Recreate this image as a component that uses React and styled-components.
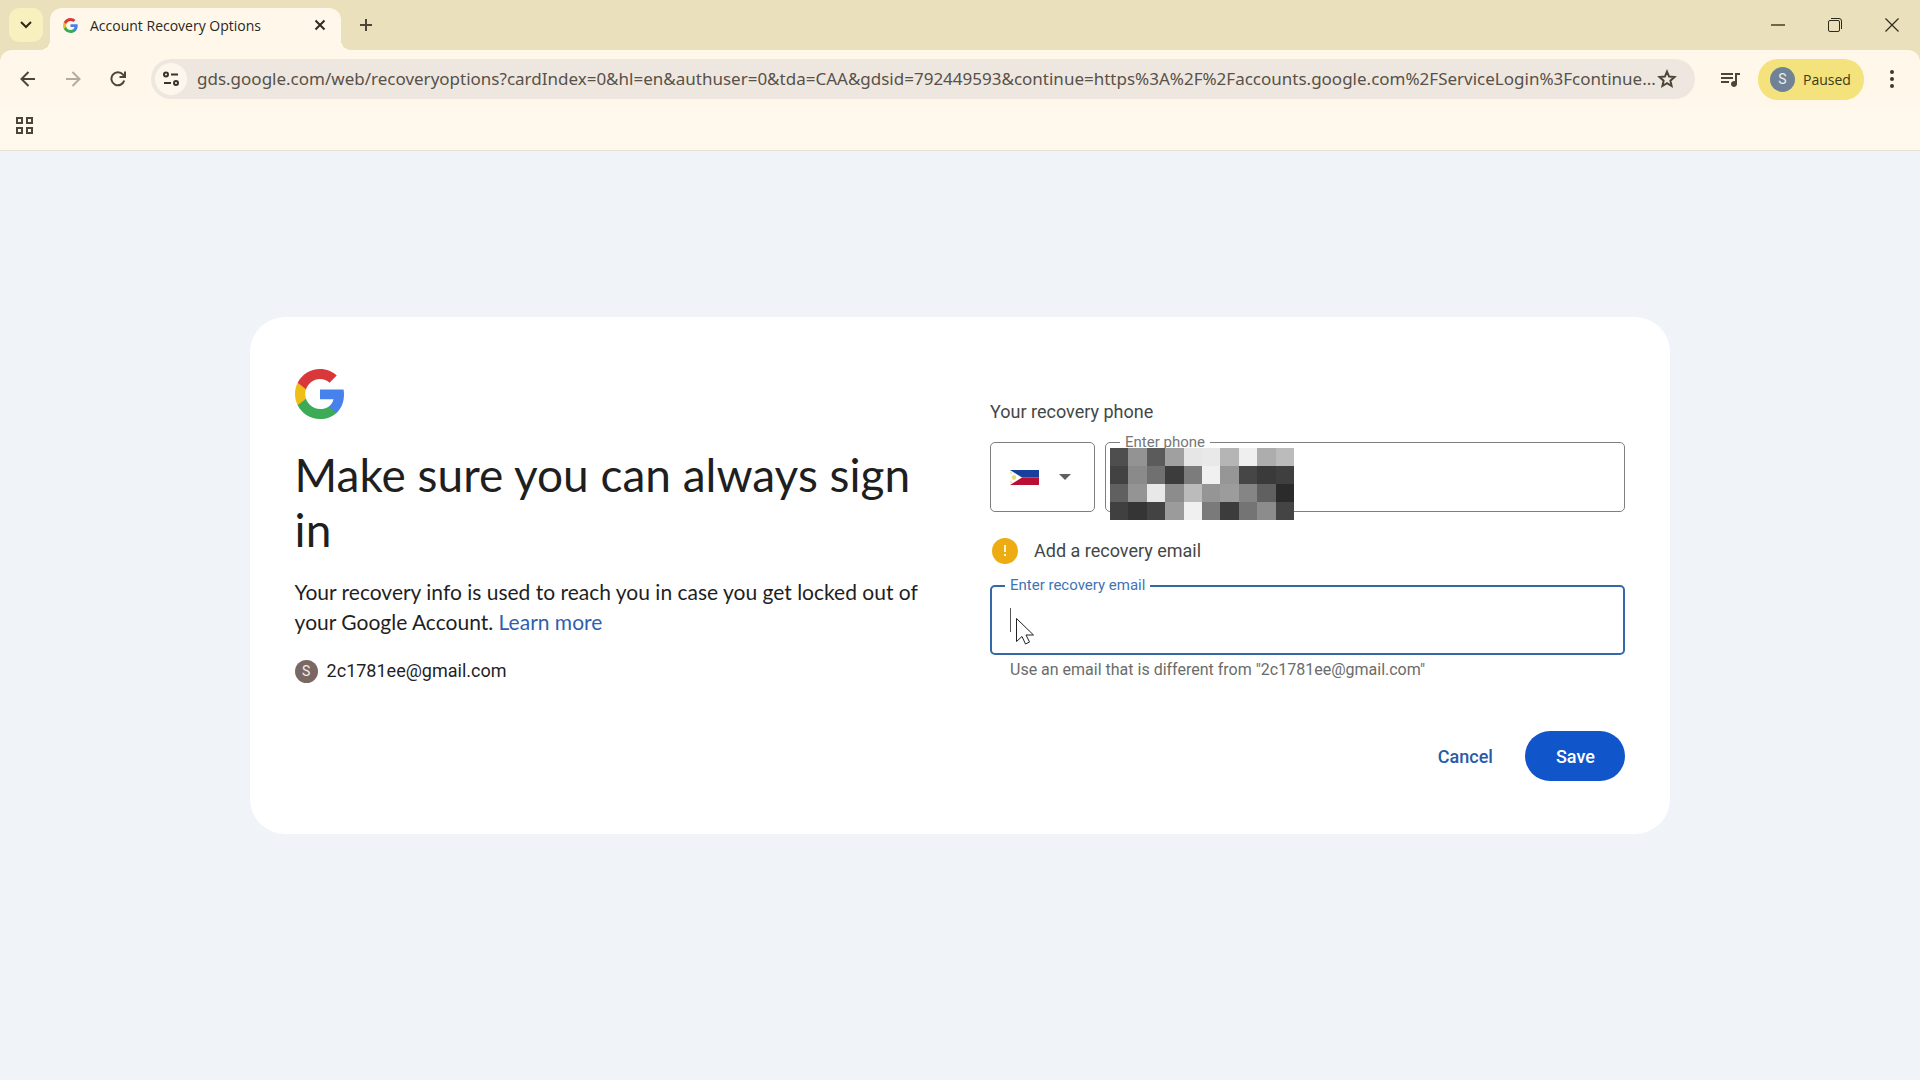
import React from 'react'
import styled, { createGlobalStyle } from 'styled-components';
import { MdQueueMusic } from 'react-icons/md';

const GlobalStyle = createGlobalStyle`
    * {
        box-sizing: border-box;
    }
    body {
        margin: 0;
        background-color: #f0f3f7;
        font-family: "Open Sans", "Noto Sans", sans-serif;
    }
    button, input, select {
        font: inherit;
        margin: 0;
    }
`
const Page = styled.div`
    min-height: 100vh;
    display: flex;
    flex-direction: column;
`
const Browser = styled.header`
    background-color: #eae0bc;
    border-bottom: 1px solid #e4e0d6;
`
const TabStrip = styled.div`
    height: 50px;
    display: flex;
    align-items: flex-end;
    padding-left: 9px;
`
const PlainButton = styled.button`
    display: flex;
    align-items: center;
    justify-content: center;
    flex: none;
    padding: 0;
    border: none;
    background: none;
    cursor: pointer;
`
const TabSearch = styled(PlainButton)`
    width: 34px;
    height: 34px;
    margin-bottom: 8px;
    border-radius: 10px;
    background-color: #f9f0c0;
`
const Tab = styled.div`
    position: relative;
    width: 291px;
    height: 42px;
    margin-left: 7px;
    padding: 0 10px 8px 13px;
    display: flex;
    align-items: center;
    border-radius: 12px 12px 0 0;
    background-color: #fff8ea;

    &::before, &::after {
        content: '';
        position: absolute;
        bottom: 0;
        width: 10px;
        height: 10px;
    }
    &::before {
        left: -10px;
        background: radial-gradient(circle at 0 0, transparent 10px, #fff8ea 10px);
    }
    &::after {
        right: -10px;
        background: radial-gradient(circle at 100% 0, transparent 10px, #fff8ea 10px);
    }
`
const TabTitle = styled.span`
    flex: 1;
    margin-left: 12px;
    font-size: 14px;
    color: #2a261c;
    white-space: nowrap;
`
const TabClose = styled(PlainButton)`
    width: 22px;
    height: 22px;
`
const NewTab = styled(PlainButton)`
    width: 34px;
    height: 34px;
    margin: 0 0 8px 8px;
`
const WindowButtons = styled.div`
    display: flex;
    align-self: stretch;
    margin-left: auto;
`
const WindowButton = styled(PlainButton)`
    width: 57px;
    height: 50px;
`
const Toolbar = styled.div`
    height: 58px;
    display: flex;
    align-items: center;
    padding: 0 10px;
    border-radius: 12px 12px 0 0;
    background-color: #fff8ea;
`
const NavButton = styled(PlainButton)`
    width: 36px;
    height: 36px;
    margin-right: 9px;
`
const AddressBar = styled.div`
    flex: 1;
    min-width: 0;
    height: 40px;
    display: flex;
    align-items: center;
    margin: 0 17px 0 6px;
    padding: 0 17px 0 4px;
    border-radius: 20px;
    background-color: #eee7e0;
`
const SiteInfo = styled(PlainButton)`
    width: 32px;
    height: 32px;
    border-radius: 50%;
    background-color: #fdf6ec;
`
const Address = styled.input`
    flex: 1;
    min-width: 0;
    margin-left: 10px;
    padding: 0;
    border: none;
    outline: none;
    font-family: "Noto Sans", sans-serif;
    font-size: 17px;
    line-height: 28px;
    color: #575149;
    background: none;
`
const StarButton = styled(PlainButton)`
    width: 22px;
    height: 36px;
`
const IconButton = styled(PlainButton)`
    width: 36px;
    height: 36px;
`
const ProfileButton = styled(PlainButton)`
    width: 106px;
    height: 41px;
    justify-content: flex-start;
    gap: 8px;
    margin: 0 10px 0 10px;
    padding: 0 12px;
    border-radius: 20px;
    background-color: #f4e27c;
    font-size: 14px;
    color: #403a18;
`
const Avatar = styled.span`
    display: flex;
    align-items: center;
    justify-content: center;
    flex: none;
    width: ${props => props.size}px;
    height: ${props => props.size}px;
    border-radius: 50%;
    background-color: ${props => props.color};
    color: #eeeeee;
    font-family: Roboto, sans-serif;
    font-size: 14px;
`
const Bookmarks = styled.div`
    height: 42px;
    padding: 0 7px;
    background-color: #fff8ec;
`
const Main = styled.main`
    flex: 1;
    padding: 166px 13% 60px;
`
const Card = styled.section`
    display: grid;
    grid-template-columns: 1fr 1fr;
    column-gap: 60px;
    padding: 52px 45px 53px 45px;
    border-radius: 35px;
    background-color: #ffffff;
    color: #1f1f1f;
    font-family: Roboto, sans-serif;

    @media (max-width: 1200px) {
        grid-template-columns: 1fr;
    }
`
const Intro = styled.div`
    display: flex;
    flex-direction: column;
    align-items: flex-start;
`
const Title = styled.h1`
    margin: 28px 0 0;
    font-family: Lato, sans-serif;
    font-size: 46px;
    font-weight: 400;
    line-height: 55px;
`
const Description = styled.p`
    margin: 20px 0 0;
    font-family: Lato, sans-serif;
    font-size: 21px;
    line-height: 30px;
`
const Link = styled.a`
    color: #2f5fae;
    text-decoration: none;
`
const Account = styled.div`
    display: flex;
    align-items: center;
    gap: 9px;
    margin-top: 22px;
    font-size: 18px;
    line-height: 24px;
`
const Form = styled.form`
    display: flex;
    flex-direction: column;
    padding-top: 30px;
`
const SectionTitle = styled.div`
    display: flex;
    align-items: center;
    gap: 16px;
    font-size: 18px;
    line-height: 26px;
    color: #444746;
`
const PhoneRow = styled.div`
    display: flex;
    gap: 10px;
    margin: 17px 0 26px;
`
const Field = styled.div`
    position: relative;
    flex: 1;
    display: flex;
`
const CountryField = styled(Field)`
    flex: none;
    width: 105px;
`
const CountrySelect = styled.select`
    width: 100%;
    height: 70px;
    border: 1px solid #7d7f7e;
    border-radius: 5px;
    appearance: none;
    background-color: transparent;
`
const CountryFace = styled.div`
    position: absolute;
    inset: 0;
    display: flex;
    align-items: center;
    justify-content: space-between;
    padding: 0 24px 0 20px;
    pointer-events: none;
`
const TextInput = styled.input`
    width: 100%;
    height: 70px;
    padding: 0 19px;
    border: ${props => props.$active ? '2px solid #3468a8' : '1px solid #7d7f7e'};
    border-radius: 5px;
    outline: none;
    background-color: transparent;
    font-size: 18px;
`
const FieldLabel = styled.label`
    position: absolute;
    top: -10px;
    left: 15px;
    padding: 0 5px;
    background-color: #ffffff;
    color: ${props => props.$active ? '#3f74b5' : '#757776'};
    font-size: 15px;
    line-height: 20px;
`
const Mosaic = styled.svg`
    position: absolute;
    top: 6px;
    left: 5px;
`
const EmailField = styled(Field)`
    flex: none;
    margin-top: 21px;
`
const Caret = styled.span`
    position: absolute;
    top: 23px;
    left: 20px;
    width: 1px;
    height: 24px;
    background-color: #555555;
`
const Pointer = styled.svg`
    position: absolute;
    top: 32px;
    left: 25px;
`
const Hint = styled.p`
    margin: 5px 0 0 20px;
    font-size: 16px;
    line-height: 20px;
    color: #6a6c6b;
`
const Actions = styled.div`
    display: flex;
    justify-content: flex-end;
    gap: 10px;
    margin-top: 51px;
`
const ActionButton = styled.button`
    min-width: 100px;
    height: 50px;
    padding: 0 20px;
    border: none;
    border-radius: 25px;
    background-color: ${props => props.$primary ? '#1155cb' : 'transparent'};
    color: ${props => props.$primary ? '#ffffff' : '#2a5aa5'};
    font-size: 18px;
    font-weight: 500;
    cursor: pointer;
`

const mosaicRows = [
    ['#4e4e4e', '#939393', '#5b5b5b', '#a0a0a0', '#e6e6e6', '#e9e9e9', '#b5b5b5', '#efefef', '#adadad', '#bbbbbb'],
    ['#424242', '#8a8a8a', '#707070', '#3c3c3c', '#7c7c7c', '#f0f0f0', '#969696', '#464646', '#3a3a3a', '#3f3f3f'],
    ['#606060', '#949494', '#e8e8e8', '#8c8c8c', '#bbbbbb', '#959595', '#9c9c9c', '#858585', '#606060', '#2b2b2b'],
    ['#404040', '#353535', '#434343', '#9b9b9b', '#f0f0f0', '#7a7a7a', '#3c3c3c', '#747474', '#8c8c8c', '#444444'],
]

function GoogleLogo(props){
    return(
        <svg width={props.size} height={props.size} viewBox="2 2 44 44" aria-hidden="true">
            <path fill="#4681ec" d="M45.12 24.5c0-1.56-.14-3.06-.4-4.5H24v8.51h11.84c-.51 2.75-2.06 5.08-4.39 6.64v5.52h7.11c4.16-3.83 6.56-9.47 6.56-16.17z"/>
            <path fill="#3bab55" d="M24 46c5.94 0 10.92-1.97 14.56-5.33l-7.11-5.52c-1.97 1.32-4.49 2.1-7.45 2.1-5.73 0-10.58-3.87-12.31-9.07H4.34v5.7C7.96 41.07 15.4 46 24 46z"/>
            <path fill="#f1bd17" d="M11.69 28.18C11.25 26.86 11 25.45 11 24s.25-2.86.69-4.18v-5.7H4.34C2.85 17.09 2 20.45 2 24c0 3.55.85 6.91 2.34 9.88l7.35-5.7z"/>
            <path fill="#d9383a" d="M24 10.75c3.23 0 6.13 1.11 8.41 3.29l6.31-6.31C34.91 4.18 29.93 2 24 2 15.4 2 7.96 6.93 4.34 14.12l7.35 5.7c1.73-5.2 6.58-9.07 12.31-9.07z"/>
        </svg>
    );
}

function Stroke(props){
    return(
        <svg width={props.w || 16} height={props.h || 16} viewBox={`0 0 ${props.w || 16} ${props.h || 16}`}
            fill="none" stroke={props.color || '#4b4738'} strokeWidth={props.weight || 2} aria-hidden="true">
            {props.children}
        </svg>
    );
}

function BrowserBar(){
    return(
        <Browser>
            <TabStrip>
                <TabSearch aria-label="Search tabs">
                    <Stroke color="#2d2915"><path d="M3 5l5 5 5-5"/></Stroke>
                </TabSearch>
                <Tab>
                    <GoogleLogo size={15}/>
                    <TabTitle>Account Recovery Options</TabTitle>
                    <TabClose aria-label="Close tab">
                        <Stroke w={12} h={12} color="#2d2a20"><path d="M1.5 1.5l9 9M10.5 1.5l-9 9"/></Stroke>
                    </TabClose>
                </Tab>
                <NewTab aria-label="New tab">
                    <Stroke w={14} h={14}><path d="M7 1v12M1 7h12"/></Stroke>
                </NewTab>
                <WindowButtons>
                    <WindowButton aria-label="Minimize">
                        <Stroke w={14} h={14} color="#6f6844"><path d="M0 7h14"/></Stroke>
                    </WindowButton>
                    <WindowButton aria-label="Restore">
                        <Stroke w={14} h={14} color="#2e2b1c" weight={1}>
                            <rect x="0.5" y="2.5" width="11" height="11" rx="1.5"/>
                            <path d="M3 .5h8a2.5 2.5 0 0 1 2.5 2.5v8"/>
                        </Stroke>
                    </WindowButton>
                    <WindowButton aria-label="Close">
                        <Stroke w={14} h={14} color="#2e2b1c" weight={1.2}><path d="M.5.5l13 13M13.5.5l-13 13"/></Stroke>
                    </WindowButton>
                </WindowButtons>
            </TabStrip>
            <Toolbar>
                <NavButton aria-label="Back">
                    <Stroke><path d="M15 8H2M8.5 1L1.5 8l7 7"/></Stroke>
                </NavButton>
                <NavButton aria-label="Forward">
                    <Stroke color="#b3ad9f"><path d="M1 8h13M7.5 1l7 7-7 7"/></Stroke>
                </NavButton>
                <NavButton aria-label="Reload">
                    <Stroke>
                        <path d="M14.2 9.5A6.5 6.5 0 1 1 13 3.7L14 5"/>
                        <path d="M15 .5V6H9.5"/>
                    </Stroke>
                </NavButton>
                <AddressBar>
                    <SiteInfo aria-label="Site information">
                        <Stroke color="#37342c">
                            <circle cx="3" cy="3.5" r="2"/>
                            <path d="M8 3.5h7M1 12h7"/>
                            <circle cx="13" cy="12" r="2"/>
                        </Stroke>
                    </SiteInfo>
                    <Address
                        aria-label="Address"
                        defaultValue="gds.google.com/web/recoveryoptions?cardIndex=0&hl=en&authuser=0&tda=CAA&gdsid=792449593&continue=https%3A%2F%2Faccounts.google.com%2FServiceLogin%3Fcontinue..."
                    />
                    <StarButton aria-label="Bookmark this tab">
                        <Stroke w={20} h={20}>
                            <path d="M10 2.6l2.1 5 5.4.5-4.1 3.6 1.2 5.3-4.6-2.8-4.6 2.8 1.2-5.3-4.1-3.6 5.4-.5z"/>
                        </Stroke>
                    </StarButton>
                </AddressBar>
                <IconButton aria-label="Media controls">
                    <MdQueueMusic size={24} color="#4b4738"/>
                </IconButton>
                <ProfileButton>
                    <Avatar size={25} color="#708296">S</Avatar>
                    Paused
                </ProfileButton>
                <IconButton aria-label="Menu">
                    <svg width="36" height="20" viewBox="0 0 36 20" fill="#3d392c" aria-hidden="true">
                        <circle cx="18" cy="3" r="2"/>
                        <circle cx="18" cy="10" r="2"/>
                        <circle cx="18" cy="17" r="2"/>
                    </svg>
                </IconButton>
            </Toolbar>
            <Bookmarks>
                <IconButton aria-label="Apps">
                    <Stroke w={18} h={18}>
                        <rect x="1" y="1" width="5" height="5"/>
                        <rect x="11" y="1" width="5" height="5"/>
                        <rect x="1" y="11" width="5" height="5"/>
                        <rect x="11" y="11" width="5" height="5"/>
                    </Stroke>
                </IconButton>
            </Bookmarks>
        </Browser>
    );
}

function Flag(){
    return(
        <svg width="29" height="15" viewBox="0 0 29 15" aria-hidden="true">
            <path fill="#173f9c" d="M0 0h29v7.5H0z"/>
            <path fill="#b90f35" d="M0 7.5h29V15H0z"/>
            <path fill="#ffffff" d="M0 0l12 7.5L0 15z"/>
            <circle cx="4" cy="7.5" r="2.3" fill="#e6dc7c"/>
            <circle cx="1" cy="3" r="1" fill="#ece3a0"/>
            <circle cx="1" cy="12" r="1" fill="#ece3a0"/>
        </svg>
    );
}

function RecoveryForm(){
    return(
        <Form onSubmit={(e) => e.preventDefault()}>
            <SectionTitle>Your recovery phone</SectionTitle>
            <PhoneRow>
                <CountryField>
                    <CountrySelect aria-label="Country">
                        <option value="PH" aria-label="Philippines"></option>
                    </CountrySelect>
                    <CountryFace>
                        <Flag/>
                        <svg width="12" height="6" viewBox="0 0 12 6" aria-hidden="true">
                            <path fill="#5f6160" d="M0 0h12L6 6z"/>
                        </svg>
                    </CountryFace>
                </CountryField>
                <Field>
                    <TextInput id="phone" type="tel"/>
                    <FieldLabel htmlFor="phone">Enter phone</FieldLabel>
                    <Mosaic width="184" height="72" viewBox="0 0 10 4" preserveAspectRatio="none" shapeRendering="crispEdges" aria-hidden="true">
                        {mosaicRows.map((row, y) => row.map((fill, x) => (
                            <rect key={`${x}-${y}`} x={x} y={y} width="1" height="1" fill={fill}/>
                        )))}
                    </Mosaic>
                </Field>
            </PhoneRow>
            <SectionTitle>
                <svg width="28" height="26" viewBox="0 0 28 26" aria-hidden="true">
                    <circle cx="15" cy="13" r="13" fill="#edac12"/>
                    <path fill="#fff6dc" d="M14 7h2v7h-2zM14 16h2v2h-2z"/>
                </svg>
                Add a recovery email
            </SectionTitle>
            <EmailField>
                <TextInput id="email" type="email" aria-describedby="email-hint" $active/>
                <FieldLabel htmlFor="email" $active>Enter recovery email</FieldLabel>
                <Caret/>
                <Pointer width="20" height="28" viewBox="0 0 20 28" aria-hidden="true">
                    <path fill="#ffffff" stroke="#222222" d="M1.5 1.5v23l5.5-5 3.5 7.5 4-2-3.5-7h7.5z"/>
                </Pointer>
            </EmailField>
            <Hint id="email-hint">Use an email that is different from "2c1781ee@gmail.com"</Hint>
            <Actions>
                <ActionButton type="button">Cancel</ActionButton>
                <ActionButton type="submit" $primary>Save</ActionButton>
            </Actions>
        </Form>
    );
}

function App(){
    return(
        <Page>
            <GlobalStyle/>
            <BrowserBar/>
            <Main>
                <Card>
                    <Intro>
                        <GoogleLogo size={50}/>
                        <Title>Make sure you can always sign in</Title>
                        <Description>
                            Your recovery info is used to reach you in case you get locked out of your Google Account. <Link href="#learn-more">Learn more</Link>
                        </Description>
                        <Account>
                            <Avatar size={23} color="#7c6863">S</Avatar>
                            2c1781ee@gmail.com
                        </Account>
                    </Intro>
                    <RecoveryForm/>
                </Card>
            </Main>
        </Page>
    );
}

export default App
